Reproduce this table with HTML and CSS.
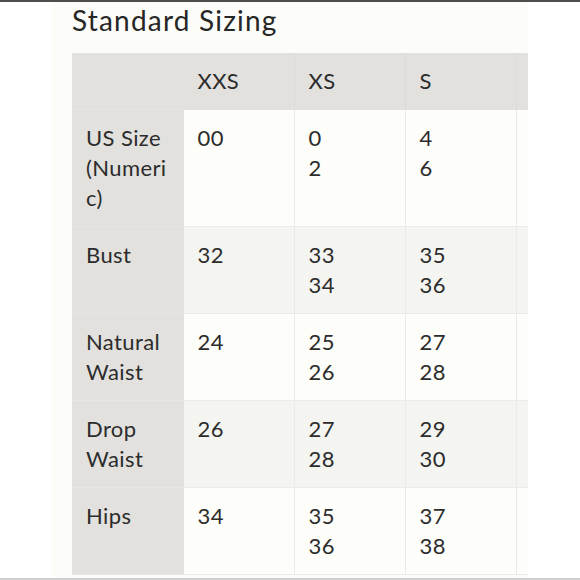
FILE: index.html
```html
<!DOCTYPE html>
<html lang="en">
<head>
<meta charset="utf-8">
<title>Standard Sizing</title>
<link rel="stylesheet" href="styles.css">
</head>
<body>
<div class="topbar"></div>
<main class="panel">
  <h1 class="title">Standard Sizing</h1>
  <div class="table-wrap">
    <table class="sizes">
      <colgroup>
        <col class="c-label"><col class="c-size"><col class="c-size"><col class="c-size"><col class="c-size">
      </colgroup>
      <thead>
        <tr class="head">
          <th class="label"></th><th>XXS</th><th>XS</th><th>S</th><th></th>
        </tr>
      </thead>
      <tbody>
        <tr class="light">
          <th class="label">US Size (Numeric)</th><td>00</td><td>0<br>2</td><td>4<br>6</td><td></td>
        </tr>
        <tr class="shade">
          <th class="label">Bust</th><td>32</td><td>33<br>34</td><td>35<br>36</td><td></td>
        </tr>
        <tr class="light">
          <th class="label">Natural Waist</th><td>24</td><td>25<br>26</td><td>27<br>28</td><td></td>
        </tr>
        <tr class="shade">
          <th class="label">Drop Waist</th><td>26</td><td>27<br>28</td><td>29<br>30</td><td></td>
        </tr>
        <tr class="light">
          <th class="label">Hips</th><td>34</td><td>35<br>36</td><td>37<br>38</td><td></td>
        </tr>
      </tbody>
    </table>
  </div>
</main>
<div class="bottombar"></div>
</body>
</html>
```

FILE: styles.css
```css
html, body {
  margin: 0;
  padding: 0;
  background: #ffffff;
}

body {
  font-family: Lato, "Noto Sans", sans-serif;
  color: #2a2a2a;
  width: 580px;
  height: 580px;
  overflow: hidden;
}

.topbar {
  height: 2px;
  background: #4e4e4e;
}

.panel {
  margin-left: 52px;
  width: 456px;
  height: 576px;
  padding-left: 20px;
  background: #fcfcf8;
  overflow: hidden;
}

.title {
  margin: 0;
  font-size: 28px;
  line-height: 36px;
  font-weight: 400;
  letter-spacing: 1.2px;
  color: #262626;
}

.table-wrap {
  margin-top: 15px;
  width: 456px;
  overflow: hidden;
}

.sizes {
  border-collapse: collapse;
  table-layout: fixed;
  width: 554px;
}

.c-label { width: 111px; }
.c-size { width: 111px; }

.sizes th,
.sizes td {
  font-size: 22px;
  line-height: 30px;
  font-weight: 400;
  text-align: left;
  vertical-align: top;
  padding: 13px 14px 13px 14px;
  border-bottom: 1px solid #ecebe7;
  border-right: 1px solid #ebeae6;
  overflow-wrap: anywhere;
  letter-spacing: 0.4px;
  color: #2c2c2c;
}

.head th {
  background: #e2e1de;
  border-right-color: #dcdbd8;
  border-bottom-color: #e2e1de;
}

.sizes th.label {
  background: #e2e1de;
  border-right: 1px solid #e2e1de;
  border-bottom-color: #e6e5e2;
}

.light td { background: #fdfdf9; }
.shade td { background: #f4f4f1; }

.bottombar {
  height: 2px;
  background: #cfcfcf;
}
```
